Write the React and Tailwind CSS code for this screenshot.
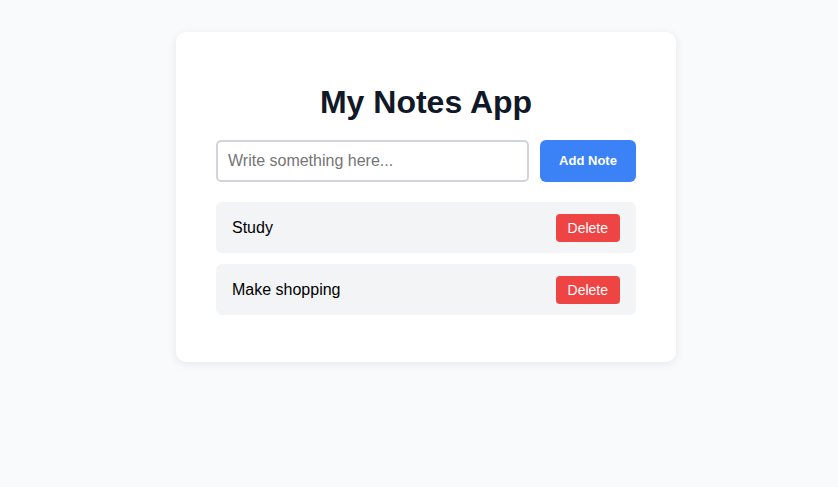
const notes = ['Study', 'Make shopping'];

const App = () => {
  return (
    <div className="min-h-screen bg-[#f9fafb] pt-8 font-['Liberation_Sans',Arial,sans-serif]">
      <div className="ml-[176px] w-[500px] rounded-[10px] bg-white px-10 pt-10 pb-[47px] shadow-[0_2px_10px_rgba(0,0,0,0.08)]">
        <h1 className="mt-3 mb-5 text-center text-[32px] leading-[36px] font-bold text-[#111827]">My Notes App</h1>
        <div className="mb-5 flex gap-[11px]">
          <input
            type="text"
            placeholder="Write something here..."
            className="h-[42px] flex-1 rounded-[5px] border-2 border-[#d1d5db] px-[10px] text-base text-black outline-none placeholder:text-[#757575]"
          />
          <button className="h-[42px] w-24 rounded-[6px] bg-[#3b82f6] text-[13px] font-bold text-white">Add Note</button>
        </div>
        <ul className="flex flex-col gap-[11px]">
          {notes.map((note) => (
            <li key={note} className="flex h-[51px] items-center justify-between rounded-[6px] bg-[#f3f4f6] px-4">
              <span className="text-base text-black">{note}</span>
              <button className="h-7 rounded-[4px] bg-[#ef4444] px-3 text-sm text-white">Delete</button>
            </li>
          ))}
        </ul>
      </div>
    </div>
  );
};

export default App;
